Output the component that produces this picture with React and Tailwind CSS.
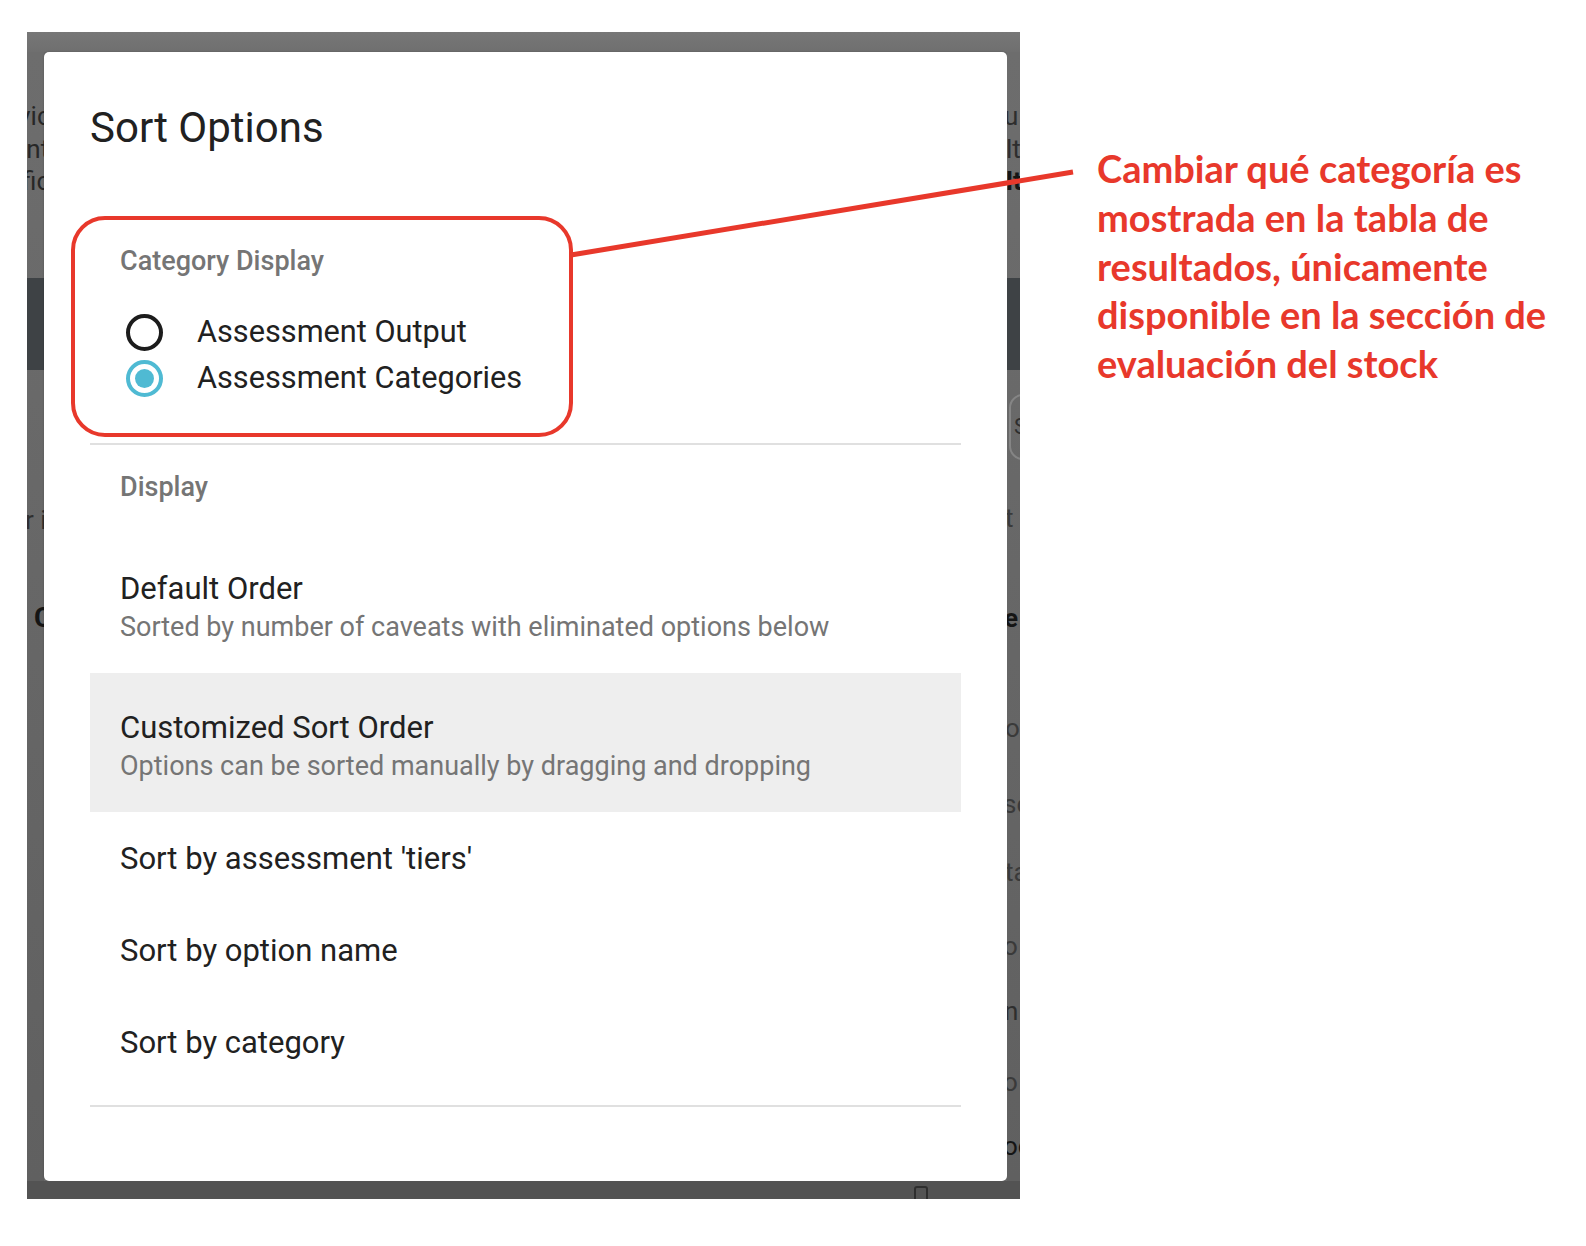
import React from "react";

function LeftStrip() {
  return (
    <div className="w-[17px] shrink-0 overflow-hidden flex flex-col bg-linear-to-b from-[#6d6d6d] to-[#606060] text-[26px] leading-[32.5px] whitespace-nowrap text-[#272727]">
      <div className="mt-[48px] h-[32.5px] -ml-[9px]">vic</div>
      <div className="h-[32.5px] -ml-[7px]">int</div>
      <div className="h-[32.5px] -ml-[5px]">fic</div>
      <div className="mt-[80.5px] h-[92px] bg-[#3e4245]" />
      <div className="mt-[134px] h-[32px] -ml-[2px] text-[#2f2f2f]">r i</div>
      <div className="mt-[66px] h-[32px] pl-[7px] font-bold text-[28px] text-[#151515]">C</div>
    </div>
  );
}

function RightStrip() {
  return (
    <div className="w-[13px] shrink-0 overflow-hidden flex flex-col bg-linear-to-b from-[#6d6d6d] to-[#606060] text-[26px] leading-[32.5px] whitespace-nowrap text-[#2e2e2e]">
      <div className="mt-[48px] h-[32.5px] -ml-[3px]">u</div>
      <div className="h-[32.5px] -ml-[1px]">lt</div>
      <div className="h-[32.5px] -ml-[1px] font-bold text-[#151515]">lt</div>
      <div className="mt-[80.5px] h-[92px] bg-[#3e4245]" />
      <div className="mt-[24px] ml-[2px] h-[66px] w-[40px] shrink-0 rounded-[14px] border-[2px] border-[#858585] flex items-center pl-[3px] text-[22px] text-[#2e2e2e]">
        S
      </div>
      <div className="mt-[42px] h-[32px] -ml-[2px] text-[#3a3a3a]">t</div>
      <div className="mt-[68px] h-[32px] -ml-[3px] font-bold text-[#151515]">e</div>
      <div className="mt-[78px] h-[32px] -ml-[2px] text-[#3a3a3a]">ov</div>
      <div className="mt-[44px] h-[32px] -ml-[4px] text-[#3a3a3a]">sc</div>
      <div className="mt-[36px] h-[32px] -ml-[2px] text-[#3a3a3a]">ta</div>
      <div className="mt-[42px] h-[32px] -ml-[4px] text-[#3a3a3a]">o</div>
      <div className="mt-[33px] h-[32px] -ml-[3px] text-[#2e2e2e]">n</div>
      <div className="mt-[39px] h-[32px] -ml-[4px] text-[#3a3a3a]">o</div>
      <div className="mt-[32px] h-[32px] -ml-[4px] text-[#151515]">oc</div>
    </div>
  );
}

function Radio({ checked, label }) {
  return (
    <div className="h-[46px] flex items-center pl-[36px]">
      {checked ? (
        <span className="w-[37px] h-[37px] shrink-0 rounded-full border-[4px] border-[#4fbad3] flex items-center justify-center">
          <span className="w-[19px] h-[19px] rounded-full bg-[#4fbad3]" />
        </span>
      ) : (
        <span className="w-[37px] h-[37px] shrink-0 rounded-full border-[4px] border-[#1c1c1c]" />
      )}
      <span className="ml-[34px] text-[30.7px] leading-[46px] text-[#212121]">{label}</span>
    </div>
  );
}

function TwoLineItem({ title, sub, selected }) {
  return (
    <div className={"pl-[30px] pt-[36px] pb-[27px] " + (selected ? "bg-[#eeeeee]" : "")}>
      <div className="text-[31px] leading-[38px] text-[#212121]">{title}</div>
      <div className="text-[27px] leading-[38px] text-[#757575]">{sub}</div>
    </div>
  );
}

function OneLineItem({ title }) {
  return (
    <div className="h-[92px] pt-[2px] flex items-center pl-[30px] text-[31px] text-[#212121]">{title}</div>
  );
}

function Dialog() {
  return (
    <div className="w-[963px] shrink-0 bg-white rounded-[5px] px-[46px] flex flex-col shadow-[0_0_2px_rgba(0,0,0,0.25)]">
      <div className="pt-[55px] h-[96px] text-[42px] leading-[42px] text-[#212121]">Sort Options</div>

      <div className="mt-[97px] h-[32px] pl-[30px] text-[27px] leading-[32px] font-medium text-[#757575]">
        Category Display
      </div>
      <div className="mt-[32px] flex flex-col">
        <Radio label="Assessment Output" />
        <Radio checked label="Assessment Categories" />
      </div>

      <div className="mt-[42px] h-[2px] bg-[#e0e0e0]" />

      <div className="mt-[26px] h-[32px] pl-[30px] text-[27px] leading-[32px] font-medium text-[#757575]">
        Display
      </div>
      <div className="mt-[31px] flex flex-col">
        <TwoLineItem title="Default Order" sub="Sorted by number of caveats with eliminated options below" />
        <TwoLineItem selected title="Customized Sort Order" sub="Options can be sorted manually by dragging and dropping" />
        <OneLineItem title="Sort by assessment 'tiers'" />
        <OneLineItem title="Sort by option name" />
        <OneLineItem title="Sort by category" />
      </div>
      <div className="mt-[17px] h-[2px] bg-[#e0e0e0]" />
    </div>
  );
}

export default function App() {
  return (
    <div className="relative w-[1586px] h-[1246px] bg-white overflow-hidden font-['Roboto',sans-serif]">
      <div className="flex items-start">
        <div className="ml-[27px] mt-[32px] w-[993px] h-[1167px] shrink-0 flex flex-col bg-[#6b6b6b]">
          <div className="h-[20px] bg-linear-to-b from-[#777777] to-[#6f6f6f]" />
          <div className="flex h-[1129px]">
            <LeftStrip />
            <Dialog />
            <RightStrip />
          </div>
          <div className="h-[18px] overflow-hidden bg-[#535353]">
            <div className="ml-[887px] mt-[5px] w-[14px] h-[18px] rounded-[3px] border-[2px] border-[#2e2e2e]" />
          </div>
        </div>
        <div className="ml-[77px] mt-[144px] font-['Lato',sans-serif] font-bold text-[38px] leading-[48.8px] text-[#e8382b] whitespace-nowrap">
          Cambiar qué categoría es
          <br />
          mostrada en la tabla de
          <br />
          resultados, únicamente
          <br />
          disponible en la sección de
          <br />
          evaluación del stock
        </div>
      </div>

      <div className="absolute left-[71px] top-[216px] w-[502px] h-[221px] rounded-[34px] border-[4.5px] border-[#e8382b]" />
      <svg className="absolute left-0 top-0 pointer-events-none" width="1586" height="1246">
        <line x1="571" y1="255" x2="1073" y2="172" stroke="#e8382b" strokeWidth="5" />
      </svg>
    </div>
  );
}
